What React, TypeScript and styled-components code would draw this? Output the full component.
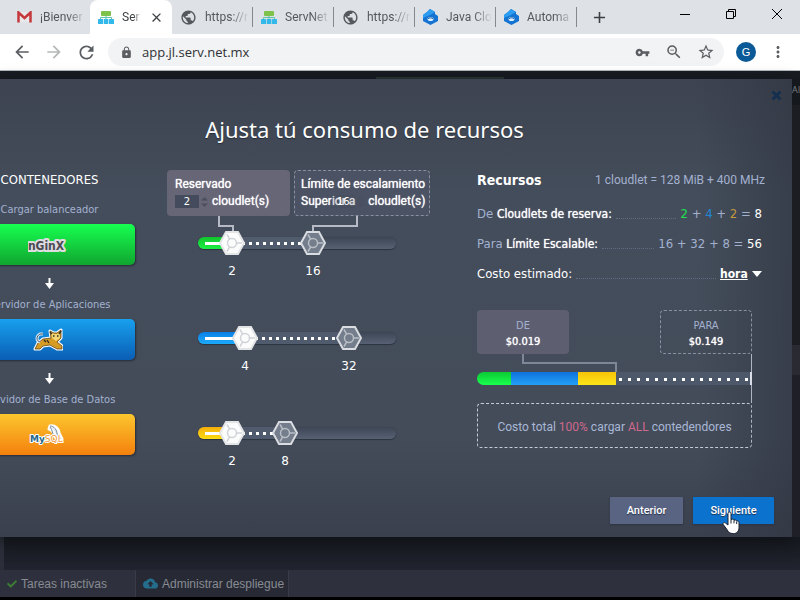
import React from "react";
import styled, { createGlobalStyle } from "styled-components";
import {
  MdArrowBack,
  MdArrowForward,
  MdRefresh,
  MdLock,
  MdVpnKey,
  MdZoomOut,
  MdStarBorder,
  MdMoreVert,
  MdPublic,
  MdClose,
  MdAdd,
  MdCloudUpload,
} from "react-icons/md";
import { FaCheck } from "react-icons/fa";

const heading = `"Noto Sans", "Open Sans", sans-serif`;
const ui = `"DejaVu Sans Condensed", "DejaVu Sans", sans-serif`;
const small = `Roboto, "Noto Sans", sans-serif`;
const chrome = `"Open Sans", "Noto Sans", sans-serif`;
const arial = `"Liberation Sans", Arial, sans-serif`;

const GlobalStyle = createGlobalStyle`
  * { box-sizing: border-box; }
  body { margin: 0; background: #000; overflow: hidden; font-family: ${ui}; }
  button, input, select { font: inherit; }
`;

const Page = styled.div`
  min-height: 100vh;
  display: flex;
  flex-direction: column;
  padding-bottom: 3px;
  overflow: hidden;
`;

/* ---------- browser frame ---------- */

const TabStrip = styled.div`
  height: 34px;
  display: flex;
  align-items: stretch;
  padding-left: 9px;
  background: #dee1e6;
  font-family: ${small};
`;

const Tab = styled.button<{ $active?: boolean; $line?: boolean }>`
  width: ${(p) => (p.$active ? 82 : 81)}px;
  flex: none;
  border: 0;
  padding: 0 ${(p) => (p.$active ? 8 : 4)}px 0 8px;
  display: flex;
  align-items: center;
  gap: 8px;
  color: ${(p) => (p.$active ? "#3c4043" : "#55585c")};
  background: ${(p) => (p.$active ? "#fff" : "transparent")};
  border-radius: ${(p) => (p.$active ? "8px 8px 0 0" : "0")};
  background-image: ${(p) => (p.$line ? "linear-gradient(#85888d, #85888d)" : "none")};
  background-size: 1px 20px;
  background-repeat: no-repeat;
  background-position: right center;
  svg { flex: none; }
`;

const TabText = styled.span`
  flex: 1;
  min-width: 0;
  overflow: hidden;
  white-space: nowrap;
  text-align: left;
  font-size: 12px;
  line-height: 18px;
  mask-image: linear-gradient(90deg, #000 60%, transparent);
`;

const NewTab = styled.button`
  width: 44px;
  border: 0;
  padding: 0;
  background: none;
  display: grid;
  place-items: center;
  color: #3c4043;
`;

const WindowButtons = styled.div`
  margin-left: auto;
  display: flex;
`;

const WindowButton = styled.button`
  width: 46px;
  height: 28px;
  border: 0;
  padding: 0;
  background: none;
  display: grid;
  place-items: center;
`;

const Toolbar = styled.div`
  height: 37px;
  display: flex;
  align-items: center;
  gap: 12px;
  padding: 0 12px;
  background: #fff;
  border-bottom: 1px solid #b5bbbd;
`;

const ToolButton = styled.button<{ $dim?: boolean }>`
  width: 20px;
  height: 20px;
  border: 0;
  padding: 0;
  background: none;
  display: grid;
  place-items: center;
  color: ${(p) => (p.$dim ? "#b4b6b8" : "#5a5d61")};
`;

const Omnibox = styled.div`
  flex: 1;
  height: 28px;
  display: flex;
  align-items: center;
  gap: 12px;
  padding: 0 8px 0 12px;
  border-radius: 14px;
  background: #f1f3f4;
  color: #5a5d61;
`;

const Address = styled.input`
  flex: 1;
  min-width: 0;
  margin-left: -3px;
  border: 0;
  padding: 0;
  background: none;
  outline: 0;
  color: #303134;
  font-family: ${chrome};
  font-size: 13px;
`;

const Avatar = styled.button`
  width: 20px;
  height: 20px;
  border: 0;
  padding: 0;
  border-radius: 50%;
  background: #0b5a97;
  color: #fff;
  font: 11px/20px ${arial};
`;

/* ---------- dimmed application ---------- */

const AppArea = styled.main`
  flex: 1;
  display: flex;
  align-items: flex-start;
  padding: 8px 0 33px;
  background:
    linear-gradient(#2d3a36, #2d3a36) 376px 6px / 128px 3px no-repeat,
    linear-gradient(#2c2f3a, #2c2f3a) 0 100% / 4px 40px no-repeat,
    linear-gradient(#181c22 0, #171a20 94%, #21242e 100%);
`;

const SideStrip = styled.aside`
  width: 8px;
  align-self: stretch;
  overflow: hidden;
  padding-top: 4px;
  color: #7a7e84;
  font: 9px/14px ${chrome};
  background: linear-gradient(#15181c 0 26px, #1b1d22 26px 266px, #292a32 266px 296px, #1f2027 296px);
`;

const Taskbar = styled.footer`
  height: 27px;
  display: flex;
  background: #2e313d;
`;

const Task = styled.button<{ $raised?: boolean }>`
  border: 0;
  border-right: 1px solid #383b48;
  padding: 0 4px 0 7px;
  min-width: ${(p) => (p.$raised ? 153 : 136)}px;
  display: flex;
  align-items: center;
  gap: 4px;
  background: ${(p) => (p.$raised ? "#272a35" : "transparent")};
  color: #888b92;
  font-family: ${arial};
  font-size: 12px;
  line-height: 16px;
  white-space: nowrap;
`;

/* ---------- dialog ---------- */

const Dialog = styled.section`
  flex: 1;
  min-width: 0;
  display: flex;
  flex-direction: column;
  color: #fff;
  background:
    linear-gradient(90deg, transparent 88%, rgba(45, 51, 62, 0.55)),
    linear-gradient(#3d4350, #444d5b 25%, #444c5a 78%, #3a404d);
  box-shadow: 0 4px 14px #0f1216;
`;

const DialogTop = styled.div`
  height: 32px;
  padding: 8px 8px 0;
  display: flex;
  justify-content: flex-end;
`;

const CloseButton = styled.button`
  width: 16px;
  height: 16px;
  border: 0;
  padding: 0;
  background: none;
  color: #15304f;
  display: grid;
  place-items: center;
`;

const Title = styled.h1`
  margin: 0;
  padding-right: 63px;
  text-align: center;
  font-family: ${heading};
  font-size: 22px;
  line-height: 36px;
  font-weight: 400;
  text-shadow: 0 1px 1px #262c36;
`;

const Columns = styled.div`
  display: flex;
  padding: 23px 27px 0 0;
`;

const Containers = styled.div`
  width: 171px;
  flex: none;
  margin-left: -36px;
  text-align: center;
`;

const ColumnTitle = styled.h2`
  margin: 0 0 10px;
  font-size: 13px;
  line-height: 20px;
  font-weight: 400;
`;

const NodeLabel = styled.div`
  color: #a3b1d0;
  font-size: 11px;
  line-height: 20px;
  white-space: nowrap;
`;

const NodeButton = styled.button<{ $from: string; $to: string }>`
  width: 100%;
  height: 41px;
  margin-top: 4px;
  border: 0;
  border-radius: 5px;
  padding: 0 4px 0 0;
  display: grid;
  place-items: center;
  background: linear-gradient(${(p) => p.$from}, ${(p) => p.$to});
  box-shadow: 1px 1px 2px #262c38;
`;

const ArrowCell = styled.div`
  height: 30px;
  padding: 7px 0 0 0;
  display: grid;
  place-items: center;
`;

const Sliders = styled.div`
  width: 263px;
  flex: none;
  margin-left: 32px;
`;

const Limits = styled.div`
  display: flex;
  gap: 4px;
  height: 46px;
`;

const LimitBox = styled.div<{ $dashed?: boolean }>`
  flex: none;
  width: ${(p) => (p.$dashed ? 136 : 123)}px;
  padding: ${(p) => (p.$dashed ? "5px 0 0 6px" : "6px 0 0 8px")};
  border-radius: 4px;
  border: ${(p) => (p.$dashed ? "1px dashed #8990a0" : "0")};
  background: ${(p) => (p.$dashed ? "#4b5263" : "#666676")};
  font-family: ${small};
  font-size: 12px;
  line-height: 17px;
  white-space: nowrap;
  text-shadow: 0 0 1px #fff;
`;

const LimitRow = styled.div`
  display: flex;
  align-items: center;
`;

const Amount = styled.input`
  width: 24px;
  height: 13px;
  border: 0;
  padding: 0;
  background: #434b5c;
  color: #fff;
  text-align: center;
  font-family: "DejaVu Sans", sans-serif;
  font-size: 10px;
  appearance: textfield;
  &::-webkit-inner-spin-button { appearance: none; }
`;

const OverlapAmount = styled(Amount)`
  margin-left: -24px;
  background: rgba(60, 68, 84, 0.2);
`;

const Spin = styled.svg`
  margin: 0 4px 0 2px;
  flex: none;
`;

const PushedText = styled.span`
  margin-left: auto;
  padding-right: 7px;
`;

const SliderWires = styled.svg`
  display: block;
  width: 100%;
  height: 15px;
`;

const SliderList = styled.div`
  display: flex;
  flex-direction: column;
  gap: 45px;
  padding: 0 34px 0 31px;
`;

const SliderTrack = styled.div`
  height: 24px;
  display: grid;
  align-items: center;
  > * { grid-area: 1 / 1; }
`;

const Groove = styled.div`
  height: 12px;
  border-radius: 6px;
  overflow: hidden;
  display: flex;
  background: linear-gradient(#3e4655, #566173);
  box-shadow: 0 1px 1px #2c333f, 0 0 1px #2f3643;
`;

const Fill = styled.div<{ $from: string; $to: string }>`
  height: 12px;
  flex: none;
  padding: 5px 0 0 7px;
  background: linear-gradient(${(p) => p.$from}, ${(p) => p.$to});
  &::after { content: ""; display: block; height: 3px; background: #fff; }
`;

const Dots = styled.div`
  height: 12px;
  flex: none;
  background:
    repeating-linear-gradient(90deg, #fff 0 3px, transparent 3px 7px) 3px 5px / 100% 3px no-repeat,
    #515b6e;
`;

const hex = (fill: string, edge: string, ring: string) =>
  `url("data:image/svg+xml,${encodeURIComponent(
    `<svg xmlns='http://www.w3.org/2000/svg' viewBox='0 0 26 24'><path d='M7 1h12l6 11-6 11H7L1 12z' fill='${fill}' stroke='${edge}' stroke-width='2'/><g fill='none' stroke='${ring}' stroke-width='1.5'><circle cx='13' cy='12' r='4.5'/><path d='M17.500 12h5.500M10.700 8.100L8 3.500M10.700 15.900L8 20.500'/></g></svg>`
  )}")`;

const Range = styled.input<{ $solid?: boolean }>`
  appearance: none;
  width: 100%;
  height: 24px;
  margin: 0;
  background: none;
  pointer-events: none;
  &::-webkit-slider-runnable-track { height: 24px; background: none; }
  &::-webkit-slider-thumb {
    appearance: none;
    pointer-events: auto;
    width: 26px;
    height: 24px;
    background: ${(p) =>
      p.$solid ? hex("#fcfcfc", "#e2e4e6", "#d0d3d7") : hex("#747d8b", "#d9dce0", "#b9bec6")} center / 26px 24px no-repeat;
  }
`;

const Values = styled.div`
  display: flex;
  margin-top: 7px;
  margin-bottom: 1px;
  font: 12px/18px "DejaVu Sans", sans-serif;
`;

const Value = styled.output`
  width: 26px;
  flex: none;
  text-align: center;
`;

const Resources = styled.div`
  flex: 1;
  min-width: 0;
  margin-left: 47px;
  display: flex;
  flex-direction: column;
`;

const ResourceHead = styled.div`
  display: flex;
  justify-content: space-between;
  align-items: center;
  height: 20px;
  margin-bottom: 9px;
  white-space: nowrap;
  color: #a3b1d0;
  font-family: ${small};
  font-size: 12px;
  h2 { margin: 0; color: #fff; font-family: ${ui}; font-size: 14px; line-height: 20px; }
`;

const Row = styled.div`
  display: flex;
  align-items: center;
  height: 30px;
  padding-right: 3px;
  color: #a3b1d0;
  font-size: 13px;
  line-height: 18px;
  white-space: nowrap;
`;

const Strong = styled.span`
  color: #fff;
  font-size: 12px;
  text-shadow: 0 0 1px #fff;
`;

const Plain = styled.span`
  color: #fff;
`;

const Leader = styled.span`
  flex: 1;
  height: 10px;
  margin: 0 4px;
  border-bottom: 1px dotted #5f6b80;
`;

const Tint = styled.span<{ $color: string }>`
  color: ${(p) => p.$color};
`;

const Period = styled.select`
  appearance: none;
  border: 0;
  padding: 0 4px 0 0;
  background: none;
  color: #fff;
  font-size: 12px;
  font-weight: 700;
  text-decoration: underline;
  outline: 0;
`;

const Cost = styled.div`
  margin: 21px 13px 0 0;
`;

const Prices = styled.div`
  display: flex;
  justify-content: space-between;
`;

const Price = styled.div<{ $dashed?: boolean }>`
  width: 92px;
  height: 44px;
  padding-top: ${(p) => (p.$dashed ? 7 : 8)}px;
  border-radius: 4px;
  border: ${(p) => (p.$dashed ? "1px dashed #8990a0" : "0")};
  background: ${(p) => (p.$dashed ? "transparent" : "#5d5f70")};
  text-align: center;
  color: #a3b1d0;
  font-size: 11px;
  line-height: 16px;
`;

const PriceValue = styled.div`
  color: #fff;
  font-size: 11px;
  line-height: 15px;
  text-shadow: 0 0 1px #fff;
`;

const Wires = styled.svg`
  display: block;
  width: 100%;
  height: 18px;
`;

const CostBar = styled.div`
  height: 13px;
  display: flex;
  border-radius: 7px 0 0 7px;
  overflow: hidden;
  background: #4d586a;
  border-right: 2px solid #d9dde8;
`;

const Segment = styled.div<{ $w: number; $from: string; $to: string }>`
  width: ${(p) => p.$w}px;
  background: linear-gradient(${(p) => p.$from}, ${(p) => p.$to});
`;

const CostDots = styled.div`
  flex: 1;
  background: repeating-linear-gradient(90deg, #fff 0 3px, transparent 3px 9px) 3px 6px / 100% 3px no-repeat;
`;

const TotalBox = styled.p`
  margin: 0;
  height: 45px;
  border: 1px dashed #c6cad4;
  border-right-color: #aeb4c1;
  border-radius: 4px;
  text-align: center;
  color: #a9b7d6;
  font-family: ${small};
  font-size: 12px;
  line-height: 46px;
  white-space: nowrap;
  em { color: #d0688c; font-style: normal; }
`;

const Actions = styled.div`
  display: flex;
  justify-content: flex-end;
  gap: 10px;
  padding: 26px 18px 13px;
`;

const ActionButton = styled.button<{ $primary?: boolean }>`
  width: ${(p) => (p.$primary ? 81 : 73)}px;
  height: 27px;
  border: 0;
  border-radius: 1px;
  padding: 0;
  position: relative;
  background: ${(p) => (p.$primary ? "#0b72cd" : "#586482")};
  color: #fff;
  font: 500 11px/27px ${small};
  text-shadow: 0 1px 1px #27334c;
  box-shadow: 0 1px 2px #2d3442;
`;

const Pointer = styled.svg`
  position: absolute;
  left: 28px;
  top: 14px;
`;

/* ---------- drawings ---------- */

const GmailIcon = () => (
  <svg width="15" height="12" viewBox="0 0 15 12">
    <path d="M1 1h13v10H1z" fill="#e9e9ea" />
    <path d="M1.500 11.500V1.500L7.500 7l6-5.500v10" fill="none" stroke="#c5383c" strokeWidth="2.500" />
  </svg>
);

const ServIcon = () => (
  <svg width="16" height="13" viewBox="0 0 16 13">
    <path d="M8 4v3M2.500 9V6.500h11V9M8 6v3" fill="none" stroke="#62c2a5" strokeWidth="1" />
    <rect x="3" y="0" width="10" height="5" rx="1" fill="#7cc24b" />
    <rect x="0" y="8" width="5" height="5" rx=".5" fill="#33b8ea" />
    <rect x="5.700" y="8" width="4.700" height="5" rx=".5" fill="#33b8ea" />
    <rect x="11" y="8" width="5" height="5" rx=".5" fill="#33b8ea" />
  </svg>
);

const JelasticIcon = () => (
  <svg width="15" height="16" viewBox="0 0 15 16">
    <path d="M7 0l5 3v2l3 2v5l-7.500 4L0 12V6l4-3z" fill="#1573d1" />
    <path d="M7 0l5 3-5 3-7 3V6l4-3z" fill="#2c9df0" />
    <ellipse cx="7.500" cy="10" rx="3" ry="2" fill="#dff0ff" />
    <path d="M5 9.600c1-1 4-1 5 0" stroke="#1159a8" fill="none" />
  </svg>
);

const DownArrow = () => (
  <svg width="9" height="11" viewBox="0 0 9 11">
    <path d="M4.500 0v6" stroke="#fff" strokeWidth="2" />
    <path d="M0 5h9L4.500 11z" fill="#fff" />
  </svg>
);

const logoText = { paintOrder: "stroke", strokeLinejoin: "round" } as const;

const NginxLogo = () => (
  <svg width="40" height="22" viewBox="0 0 40 22">
    <text {...logoText} x="18" y="16" textAnchor="middle" fontFamily="DejaVu Sans Condensed, sans-serif" fontWeight="700" fontSize="12" fill="#4b4a54" stroke="#dedce0" strokeWidth="4">
      nGinX
    </text>
  </svg>
);

const TomcatLogo = () => (
  <svg width="30" height="24" viewBox="0 0 30 24">
    <path d="M2 21l3-6 5-4 8-1-1-7 4 2h3l4-3v8l-4 4 5 4v3h-5l-7-4-7 1-3 3z" fill="#d69b22" stroke="#fff" strokeWidth="3" strokeLinejoin="round" />
    <path d="M2 21l3-6 5-4 8-1-1-7 4 2h3l4-3v8l-4 4 5 4v3h-5l-7-4-7 1-3 3z" fill="#d69b22" stroke="#5e4720" strokeWidth=".8" />
    <path d="M18 4l3 2h3l3-2v6l-4 3-4-3z" fill="#f2d774" />
    <path d="M20 8h1.500M24 8h1.500M11 12l2 2M14 12l2 3" stroke="#2e2a22" strokeWidth="1.300" />
    <path d="M7 14C3 13 3 8 7 6h3" stroke="#d7edf9" strokeWidth="3" fill="none" />
    <path d="M7 14C3 13 3 8 7 6h3" stroke="#40556a" strokeWidth="1" fill="none" />
    <path d="M17 4l2 2M28 3l-2 3" stroke="#3c3020" strokeWidth="1.600" />
  </svg>
);

const MySqlLogo = () => (
  <svg width="38" height="22" viewBox="0 0 38 22">
    <path d="M21 2c5-1 9 3 9 7l3 6-4 1-3-3c-1-4-2-7-6-8z" fill="#e8edf2" stroke="#fff" strokeWidth="3" strokeLinejoin="round" />
    <path d="M21 2c4 0 7 4 7 8l4 5M21 3c3 4 2 6 4 9" fill="none" stroke="#70899b" strokeWidth="1" />
    <text {...logoText} x="1" y="18" fontFamily="DejaVu Sans, sans-serif" fontWeight="700" fontSize="9" fill="#25688d" stroke="#fff" strokeWidth="2">
      My<tspan fill="#ee9a3a" fontWeight="400">SQL</tspan>
    </text>
  </svg>
);

const SpinArrows = () => (
  <Spin width="7" height="12" viewBox="0 0 7 12">
    <path d="M0 4.500L3.500 1 7 4.500zM0 7.500L3.500 11 7 7.500z" fill="#4b4f5e" />
  </Spin>
);

/* ---------- content ---------- */

const tabs = [
  { icon: <MdPublic size={17} />, text: "https://r" },
  { icon: <ServIcon />, text: "ServNet" },
  { icon: <MdPublic size={17} />, text: "https://r" },
  { icon: <JelasticIcon />, text: "Java Clo" },
  { icon: <JelasticIcon />, text: "Automa" },
];

const nodes = [
  { label: "Cargar balanceador", logo: <NginxLogo />, from: "#17ff50", to: "#10a52f" },
  { label: "Servidor de Aplicaciones", logo: <TomcatLogo />, from: "#18a0ee", to: "#0a5eb4" },
  { label: "Servidor de Base de Datos", logo: <MySqlLogo />, from: "#fcc62e", to: "#f4800d" },
];

const sliders = [
  { name: "Cargar balanceador", low: 2, lowAt: 21, high: 16, highAt: 102, from: "#12c42c", to: "#1bee45" },
  { name: "Servidor de Aplicaciones", low: 4, lowAt: 34, high: 32, highAt: 138, from: "#0b7fe6", to: "#1caafa" },
  { name: "Servidor de Base de Datos", low: 2, lowAt: 21, high: 8, highAt: 74, from: "#f5ae0c", to: "#fddc12" },
];

export default function App() {
  return (
    <Page>
      <GlobalStyle />
      <TabStrip>
        <Tab>
          <GmailIcon />
          <TabText>¡Bienver</TabText>
        </Tab>
        <Tab $active>
          <ServIcon />
          <TabText>Serv</TabText>
          <MdClose size={15} />
        </Tab>
        {tabs.map((t, i) => (
          <Tab key={i} $line>
            {t.icon}
            <TabText>{t.text}</TabText>
          </Tab>
        ))}
        <NewTab aria-label="Nueva pestaña">
          <MdAdd size={19} />
        </NewTab>
        <WindowButtons>
          <WindowButton aria-label="Minimizar">
            <svg width="10" height="10" viewBox="0 0 10 10"><path d="M0 5.500h10" stroke="#000" /></svg>
          </WindowButton>
          <WindowButton aria-label="Restaurar">
            <svg width="10" height="10" viewBox="0 0 10 10"><path d="M.5 2.500h7v7h-7zM2.500 2.500v-2h7v7h-2" fill="none" stroke="#000" /></svg>
          </WindowButton>
          <WindowButton aria-label="Cerrar">
            <svg width="10" height="10" viewBox="0 0 10 10"><path d="M0 0l10 10M10 0L0 10" stroke="#000" /></svg>
          </WindowButton>
        </WindowButtons>
      </TabStrip>

      <Toolbar>
        <ToolButton aria-label="Atrás"><MdArrowBack size={20} /></ToolButton>
        <ToolButton aria-label="Adelante" $dim><MdArrowForward size={20} /></ToolButton>
        <ToolButton aria-label="Recargar"><MdRefresh size={21} /></ToolButton>
        <Omnibox>
          <MdLock size={13} />
          <Address aria-label="Dirección" defaultValue="app.jl.serv.net.mx" />
          <ToolButton aria-label="Contraseñas"><MdVpnKey size={15} /></ToolButton>
          <ToolButton aria-label="Zoom"><MdZoomOut size={18} /></ToolButton>
          <ToolButton aria-label="Favoritos"><MdStarBorder size={18} /></ToolButton>
        </Omnibox>
        <Avatar>G</Avatar>
        <ToolButton aria-label="Menú"><MdMoreVert size={18} /></ToolButton>
      </Toolbar>

      <AppArea>
        <Dialog role="dialog" aria-labelledby="dialog-title">
          <DialogTop>
            <CloseButton aria-label="Cerrar diálogo">
              <svg width="11" height="11" viewBox="0 0 11 11"><path d="M1.500 1.500l8 8M9.500 1.500l-8 8" stroke="currentColor" strokeWidth="3" /></svg>
            </CloseButton>
          </DialogTop>
          <Title id="dialog-title">Ajusta tú consumo de recursos</Title>

          <Columns>
            <Containers>
              <ColumnTitle>CONTENEDORES</ColumnTitle>
              {nodes.map((n, i) => (
                <div key={n.label}>
                  <NodeLabel>{n.label}</NodeLabel>
                  <NodeButton $from={n.from} $to={n.to} aria-label={n.label}>{n.logo}</NodeButton>
                  {i < nodes.length - 1 && <ArrowCell><DownArrow /></ArrowCell>}
                </div>
              ))}
            </Containers>

            <Sliders>
              <Limits>
                <LimitBox>
                  <label htmlFor="reserved">Reservado</label>
                  <LimitRow>
                    <Amount id="reserved" type="number" defaultValue={2} />
                    <SpinArrows />
                    cloudlet(s)
                  </LimitRow>
                </LimitBox>
                <LimitBox $dashed>
                  <label htmlFor="limit">Límite de escalamiento</label>
                  <LimitRow>
                    Superior a
                    <OverlapAmount id="limit" type="number" defaultValue={16} />
                    <SpinArrows />
                    <PushedText>cloudlet(s)</PushedText>
                  </LimitRow>
                </LimitBox>
              </Limits>
              <SliderWires viewBox="0 0 263 15" fill="none" stroke="#b5bac6" strokeWidth="2">
                <path d="M52 0v10h14v5M190 0v10h-44v5" />
              </SliderWires>
              <SliderList>
                {sliders.map((s) => (
                  <div key={s.name}>
                    <SliderTrack>
                      <Groove>
                        <Fill $from={s.from} $to={s.to} style={{ width: s.lowAt + 13 }} />
                        <Dots style={{ width: s.highAt - s.lowAt }} />
                      </Groove>
                      <Range type="range" $solid max={172} defaultValue={s.lowAt} aria-label={`${s.name}: reservado`} />
                      <Range type="range" max={172} defaultValue={s.highAt} aria-label={`${s.name}: límite`} />
                    </SliderTrack>
                    <Values>
                      <Value style={{ marginLeft: s.lowAt }}>{s.low}</Value>
                      <Value style={{ marginLeft: s.highAt - s.lowAt - 26 }}>{s.high}</Value>
                    </Values>
                  </div>
                ))}
              </SliderList>
            </Sliders>

            <Resources>
              <ResourceHead>
                <h2>Recursos</h2>
                <span>1 cloudlet = 128 MiB + 400 MHz</span>
              </ResourceHead>
              <Row>
                De&nbsp;<Strong>Cloudlets de reserva:</Strong>
                <Leader />
                <span>
                  <Tint $color="#1fe04f">2</Tint> + <Tint $color="#2188d6">4</Tint> + <Tint $color="#c1993f">2</Tint> = <Plain>8</Plain>
                </span>
              </Row>
              <Row>
                Para&nbsp;<Strong>Límite Escalable:</Strong>
                <Leader />
                <span>16 + 32 + 8 = <Plain>56</Plain></span>
              </Row>
              <Row>
                <Plain as="label" htmlFor="period">Costo estimado:</Plain>
                <Leader />
                <Period id="period"><option>hora</option></Period>
                <svg width="10" height="6" viewBox="0 0 10 6"><path d="M0 0h10L5 6z" fill="#fff" /></svg>
              </Row>

              <Cost>
                <Prices>
                  <Price>DE<PriceValue>$0.019</PriceValue></Price>
                  <Price $dashed>PARA<PriceValue>$0.149</PriceValue></Price>
                </Prices>
                <Wires viewBox="0 0 275 18" fill="none" stroke="#7d8797" strokeWidth="2">
                  <path d="M46 0v9h93v9" />
                  <path d="M274.500 0v18" stroke="#aeb4c1" strokeWidth="1" />
                </Wires>
                <CostBar>
                  <Segment $w={34} $from="#0cc934" $to="#19ff4e" />
                  <Segment $w={67} $from="#0e72dc" $to="#25a0f6" />
                  <Segment $w={38} $from="#f8c308" $to="#fde519" />
                  <CostDots />
                </CostBar>
                <Wires viewBox="0 0 275 18" fill="none">
                  <path d="M274.500 0v18" stroke="#aeb4c1" />
                </Wires>
                <TotalBox>
                  Costo total <em>100%</em> cargar <em>ALL</em> contedendores
                </TotalBox>
              </Cost>
            </Resources>
          </Columns>

          <Actions>
            <ActionButton>Anterior</ActionButton>
            <ActionButton $primary>
              Siguiente
              <Pointer width="20" height="24" viewBox="0 0 20 24">
                <path
                  d="M7 2.500c0-2 3-2 3 0v6c2-.8 2.800-.2 3 .7 1.500-.6 2.500 0 2.700.9 1.300-.4 2.300.2 2.300 1.500v5c0 3.500-2 6-5.500 6-4 0-5-1.500-6.500-4l-3.700-5c-1-1.600 1-2.700 2.300-1.500L7 14z"
                  fill="#fff"
                  stroke="#1b2233"
                />
                <path d="M10 8.500v4M13 9.300v3M15.700 10.500v2.500" stroke="#1b2233" />
              </Pointer>
            </ActionButton>
          </Actions>
        </Dialog>
        <SideStrip>AI</SideStrip>
      </AppArea>

      <Taskbar>
        <Task><FaCheck size={10} color="#3c7d33" />Tareas inactivas</Task>
        <Task $raised><MdCloudUpload size={15} color="#246d8c" />Administrar despliegue</Task>
      </Taskbar>
    </Page>
  );
}
